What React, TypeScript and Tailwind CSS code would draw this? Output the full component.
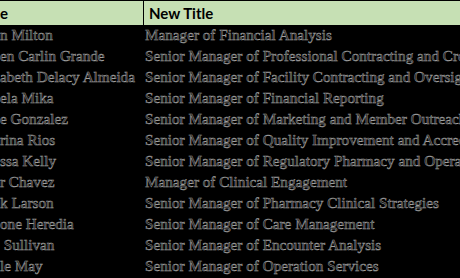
const rows = [
  ['n Milton', 'Manager of Financial Analysis'],
  ['en Carlin Grande', 'Senior Manager of Professional Contracting and Credentialing'],
  ['abeth Delacy Almeida', 'Senior Manager of Facility Contracting and Oversight'],
  ['ela Mika', 'Senior Manager of Financial Reporting'],
  ['e Gonzalez', 'Senior Manager of Marketing and Member Outreach'],
  ['rina Rios', 'Senior Manager of Quality Improvement and Accreditation'],
  ['ssa Kelly', 'Senior Manager of Regulatory Pharmacy and Operations'],
  ['r Chavez', 'Manager of Clinical Engagement'],
  ['k Larson', 'Senior Manager of Pharmacy Clinical Strategies'],
  ['one Heredia', 'Senior Manager of Care Management'],
  [' Sullivan', 'Senior Manager of Encounter Analysis'],
  ['le May', 'Senior Manager of Operation Services'],
]

export default function App() {
  return (
    <div className="w-[460px] h-[278px] bg-black overflow-hidden">
      {/* Header */}
      <div className="grid grid-cols-[143px_1fr] h-[25px] border-t border-black bg-[#c6e0b4] font-['Lato',sans-serif] font-bold text-[15px] text-black">
        <div className="flex items-center whitespace-nowrap overflow-hidden">e</div>
        <div className="flex items-center pl-[5px] border-l border-black whitespace-nowrap">New Title</div>
      </div>

      {/* Rows */}
      {rows.map(([name, title], i) => (
        <div
          key={i}
          className="grid grid-cols-[143px_1fr] h-[21px] font-['Liberation_Serif',serif] text-[15.2px] text-[#111111] [-webkit-text-stroke:0.5px_#a0a0a0]"
        >
          <div className="flex items-center whitespace-pre overflow-hidden">{name}</div>
          <div className="flex items-center pl-[2px] whitespace-nowrap overflow-hidden">{title}</div>
        </div>
      ))}
    </div>
  )
}
